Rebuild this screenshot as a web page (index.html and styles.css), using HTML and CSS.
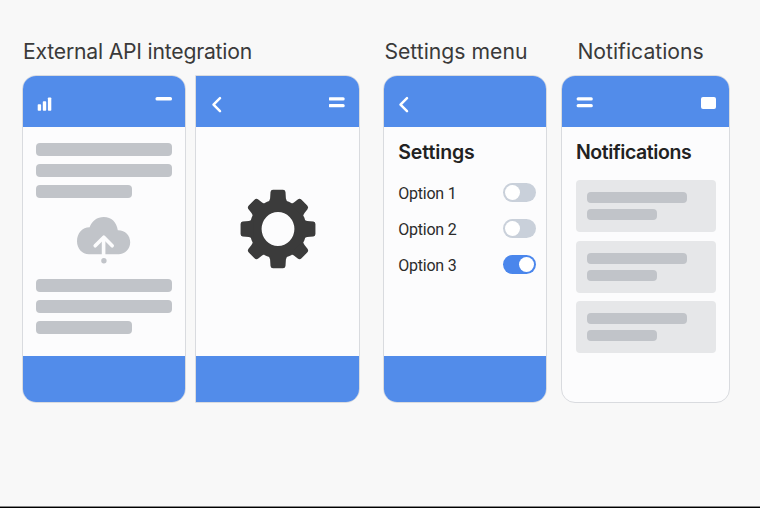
FILE: index.html
```html
<!DOCTYPE html>
<html lang="en">
<head>
<meta charset="utf-8">
<title>App screens</title>
<link rel="stylesheet" href="styles.css">
</head>
<body>
<main class="board">
  <section class="group group-api">
    <h2 class="caption cap-api">External API integration</h2>
    <div class="phones">
      <div class="phone phone-upload">
        <header class="bar">
          <svg class="signal" width="15" height="15" viewBox="0 0 15 15" fill="#fff"><rect x="0.7" y="8.2" width="3.4" height="6.6" rx=".8"/><rect x="5.8" y="5.2" width="3.4" height="9.6" rx=".8"/><rect x="10.9" y="1.5" width="3.4" height="13.3" rx=".8"/></svg>
          <svg class="dash" width="17" height="12" viewBox="0 0 17 12" fill="#fff"><rect x=".5" y="1" width="16.5" height="3.6" rx="1.6"/></svg>
        </header>
        <div class="content lines">
          <i class="line"></i><i class="line"></i><i class="line short"></i>
          <svg class="cloud" width="56" height="50" viewBox="0 0 56 50">
            <path fill="#c1c4c9" d="M13 39.3C6 39.3 1 33.5 1 26.3C1 18.3 6.3 12.4 13.6 12.3C16 5.7 21 2 27.8 2C35.5 2 40.6 7 41.8 15.2C49.2 15 54.2 20.4 54.2 27.3C54.2 34 49 39.3 42.5 39.3Z"/>
            <path fill="none" stroke="#fcfcfd" stroke-width="3.6" stroke-linecap="round" stroke-linejoin="round" d="M19.2 30.8L27.8 22.2L36.2 30.8"/>
            <path stroke="#fcfcfd" stroke-width="3.6" d="M27.6 23V41"/>
            <circle cx="27.9" cy="45.7" r="2.7" fill="#c1c4c9"/>
          </svg>
          <i class="line"></i><i class="line"></i><i class="line short"></i>
        </div>
        <footer class="foot"></footer>
      </div>
      <div class="phone phone-gear">
        <header class="bar">
          <svg class="back" width="12" height="17" viewBox="0 0 12 17" fill="none" stroke="#fff" stroke-width="2.5" stroke-linecap="round" stroke-linejoin="round"><path d="M10 2.2L3.5 8.7L10 15.2"/></svg>
          <svg class="menu" width="17" height="12" viewBox="0 0 17 12" fill="#fff"><rect x="-.5" y=".2" width="16.2" height="3.4" rx="1.5"/><rect x="-.5" y="6.9" width="16.2" height="3.4" rx="1.5"/></svg>
        </header>
        <div class="content gear-box">
          <svg width="76" height="80" viewBox="-38 -40 76 80" fill="#3b3b3b">
            <defs><path id="tooth" d="M-9.6 -26L-7.9 -30.5L-7.5 -37Q-7.2 -39.2 -5 -39.2H5Q7.2 -39.2 7.5 -37L7.9 -30.5L9.6 -26Z"/><path id="corner" d="M-8.6 -26L-7.5 -30L-6.9 -34.8Q-6.5 -37.3 -4 -37.3H4Q6.5 -37.3 6.9 -34.8L7.5 -30L8.6 -26Z"/></defs>
            <path fill-rule="evenodd" d="M0 -29.6A28.6 29.6 0 0 1 0 29.6A28.6 29.6 0 0 1 0 -29.6ZM0 -17A16.4 17 0 0 0 0 17A16.4 17 0 0 0 0 -17Z"/>
            <use href="#tooth"/><use href="#tooth" transform="rotate(180)"/>
            <use href="#tooth" transform="scale(.955 1) rotate(90)"/><use href="#tooth" transform="scale(.955 1) rotate(-90)"/>
            <use href="#corner" transform="rotate(45)"/><use href="#corner" transform="rotate(135)"/>
            <use href="#corner" transform="rotate(225)"/><use href="#corner" transform="rotate(315)"/>
          </svg>
        </div>
        <footer class="foot"></footer>
      </div>
    </div>
  </section>

  <section class="group group-settings">
    <h2 class="caption">Settings menu</h2>
    <div class="phone">
      <header class="bar">
        <svg class="back" width="12" height="17" viewBox="0 0 12 17" fill="none" stroke="#fff" stroke-width="2.5" stroke-linecap="round" stroke-linejoin="round"><path d="M9 2.2L2.5 8.7L9 15.2"/></svg>
      </header>
      <div class="content options">
        <h3 class="heading head-set">Settings</h3>
        <div class="option"><span>Option 1</span><b class="toggle"></b></div>
        <div class="option"><span>Option 2</span><b class="toggle"></b></div>
        <div class="option"><span>Option 3</span><b class="toggle on"></b></div>
      </div>
      <footer class="foot"></footer>
    </div>
  </section>

  <section class="group group-notes">
    <h2 class="caption">Notifications</h2>
    <div class="phone">
      <header class="bar">
        <svg class="menu" width="17" height="12" viewBox="0 0 17 12" fill="#fff"><rect x=".6" y=".2" width="16.2" height="3.4" rx="1.5"/><rect x=".6" y="6.9" width="16.2" height="3.4" rx="1.5"/></svg>
        <i class="square"></i>
      </header>
      <div class="content notes">
        <h3 class="heading head-note">Notifications</h3>
        <div class="note"><i></i><i></i></div>
        <div class="note"><i></i><i></i></div>
        <div class="note"><i></i><i></i></div>
      </div>
    </div>
  </section>
</main>
<div class="edge"></div>
</body>
</html>
```
FILE: styles.css
```css
* { box-sizing: border-box; }
body {
  margin: 0;
  height: 508px;
  display: flex;
  flex-direction: column;
  background: #f8f8f8;
  font-family: Inter, "Liberation Sans", sans-serif;
  overflow: hidden;
}
.board {
  flex: 1;
  display: flex;
  padding: 35px 0 0 22px;
  align-items: flex-start;
}
.group-api { width: 338px; }
.group-settings { margin-left: 23.4px; width: 164px; }
.group-notes { margin-left: 14px; width: 169px; }
.caption {
  margin: 0 0 8px 1px;
  height: 32px;
  line-height: 32px;
  font-size: 21.2px;
  font-weight: 400;
  color: #3a3a3a;
  white-space: nowrap;
}
.cap-api { letter-spacing: -0.22px; }
.group-notes .caption { margin-left: 16px; }
.phones { display: flex; justify-content: space-between; }
.phone {
  width: 164px;
  height: 328px;
  display: flex;
  flex-direction: column;
  border: 1px solid #d9dbdf;
  border-radius: 14px;
  background: #fcfcfd;
  overflow: hidden;
}
.group-notes .phone { width: 169px; }
.phone-gear { width: 165px; border-radius: 0 14px 14px 0; }
.bar {
  height: 51px;
  flex: none;
  display: flex;
  justify-content: space-between;
  align-items: flex-start;
  padding: 20px 13px 0 14px;
  background: #528cea;
}
.menu { margin-top: 1px; }
.foot { height: 46px; flex: none; background: #528cea; }
.content { flex: 1; min-height: 0; }
.lines {
  display: flex;
  flex-direction: column;
  gap: 8px;
  padding: 16px 13px 0 13.4px;
}
.line { height: 13px; flex: none; border-radius: 4px; background: #c1c4c9; }
.line.short { width: 95.5px; }
.cloud { margin: 9px 0 6px 39.7px; }
.gear-box { display: flex; justify-content: center; padding-top: 61.7px; }
.options { padding: 12px 10.8px 0 13.8px; }
.heading {
  margin: 0;
  height: 26px;
  line-height: 26px;
  font-size: 19.5px;
  font-weight: 600;
  color: #222;
  white-space: nowrap;
}
.head-set { margin-bottom: 10px; letter-spacing: -0.1px; }
.head-note { margin-bottom: 15.3px; letter-spacing: -0.42px; }
.option {
  height: 36px;
  display: flex;
  align-items: center;
  justify-content: space-between;
  font-family: Roboto, sans-serif;
  font-size: 16px;
  letter-spacing: -0.22px;
  color: #2b2b2b;
}
.toggle {
  width: 33px;
  height: 19px;
  padding: 2px;
  display: flex;
  border-radius: 10px;
  background: #c9d0da;
}
.option .toggle { margin-top: -1px; }
.toggle::before { content: ""; width: 15px; height: 15px; border-radius: 50%; background: #fff; }
.toggle.on { justify-content: flex-end; background: #4a86ec; }
.square { width: 15px; height: 11.5px; margin: 1px .5px 0 0; border-radius: 2px; background: #fff; }
.notes { padding: 12px 13.4px 0 13.6px; }
.note {
  height: 52px;
  margin-bottom: 8.5px;
  padding: 12px 11px;
  display: flex;
  flex-direction: column;
  gap: 6px;
  border-radius: 4px;
  background: #e6e7e9;
}
.note i { width: 100px; height: 12px; border-radius: 4px; background: #c1c4c9; }
.note i + i { width: 70px; }
.edge { height: 2px; background: #000; border-top: 1px solid #888; }
```
